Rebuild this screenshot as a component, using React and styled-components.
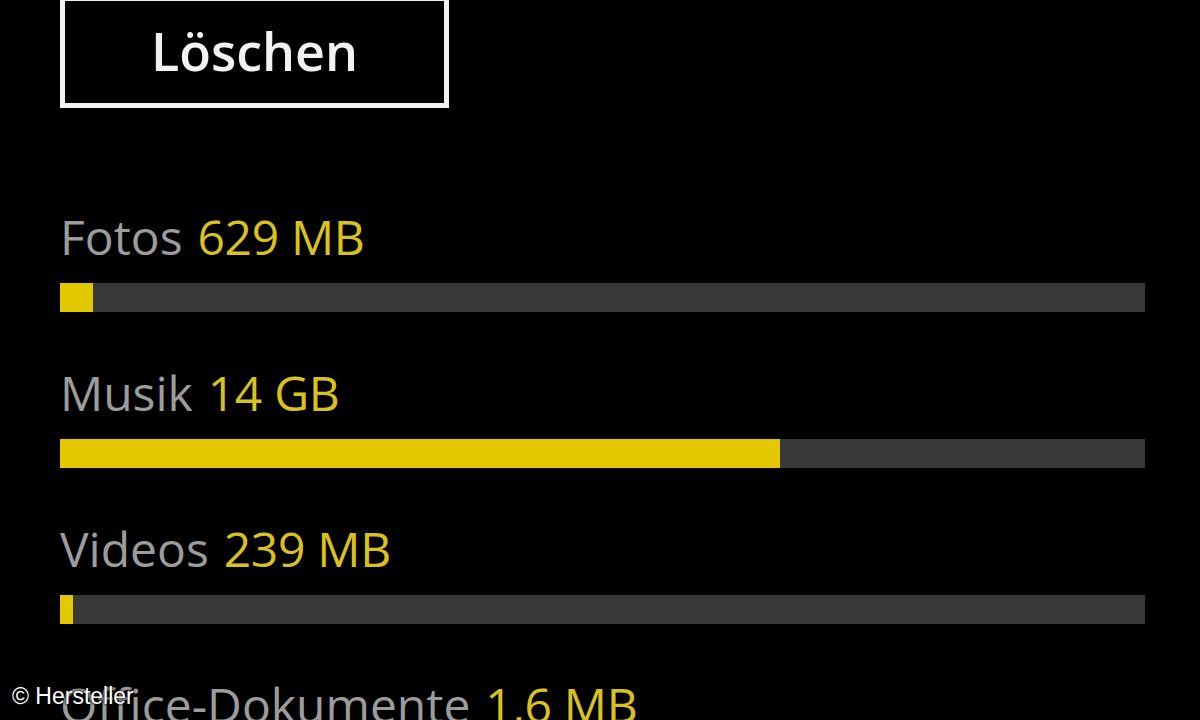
import React from "react";
import styled, { createGlobalStyle } from "styled-components";

const Global = createGlobalStyle`
  html, body { margin: 0; padding: 0; background: #000; }
  body { width: 1200px; height: 720px; overflow: hidden; }
  #root { height: 720px; }
`;

const Screen = styled.div`
  position: relative;
  width: 1200px;
  height: 720px;
  overflow: hidden;
  background: #000;
  font-family: "Open Sans", "Noto Sans", sans-serif;
  padding: 0 55px 0 60px;
  box-sizing: border-box;
`;

const DeleteButton = styled.button`
  display: flex;
  align-items: center;
  justify-content: center;
  box-sizing: border-box;
  width: 389px;
  height: 112px;
  margin-top: -4px;
  padding: 0 0 4px;
  background: #000;
  border: 5px solid #f2f2f2;
  color: #f2f2f2;
  font-family: inherit;
  font-size: 52px;
  font-weight: 600;
  letter-spacing: 0;
`;

const List = styled.div`
  display: flex;
  flex-direction: column;
  gap: 56px;
  margin-top: 104px;
`;

const Item = styled.div`
  display: flex;
  flex-direction: column;
  gap: 21px;
`;

const Label = styled.div`
  font-size: 48px;
  line-height: 50px;
  height: 50px;
  white-space: nowrap;
  color: #9c9c9c;
  letter-spacing: 0;
`;

const Value = styled.span`
  color: #d9c21e;
  margin-left: 0.31em;
  letter-spacing: -0.3px;
`;

const Track = styled.div`
  height: 29px;
  background: #383838;
  display: flex;
`;

const Fill = styled.div`
  height: 100%;
  background: #e3c800;
`;

const Credit = styled.div`
  position: absolute;
  left: 12px;
  bottom: 10px;
  font-family: "Liberation Sans", Arial, sans-serif;
  font-size: 23px;
  color: #fff;
  letter-spacing: 0;
  text-shadow: 0 0 2px #000, 0 0 3px #000;
`;

const items = [
  { name: "Fotos", value: "629 MB", fill: 33 },
  { name: "Musik", value: "14 GB", fill: 720 },
  { name: "Videos", value: "239 MB", fill: 13 },
  { name: "Office-Dokumente", value: "1,6 MB", fill: 4 },
];

export default function App() {
  return (
    <>
      <Global />
      <Screen>
        <DeleteButton>Löschen</DeleteButton>
        <List>
          {items.map((it) => (
            <Item key={it.name}>
              <Label>
                {it.name}
                <Value>{it.value}</Value>
              </Label>
              <Track>
                <Fill style={{ width: `${(it.fill / 1085) * 100}%` }} />
              </Track>
            </Item>
          ))}
        </List>
        <Credit>© Hersteller</Credit>
      </Screen>
    </>
  );
}
